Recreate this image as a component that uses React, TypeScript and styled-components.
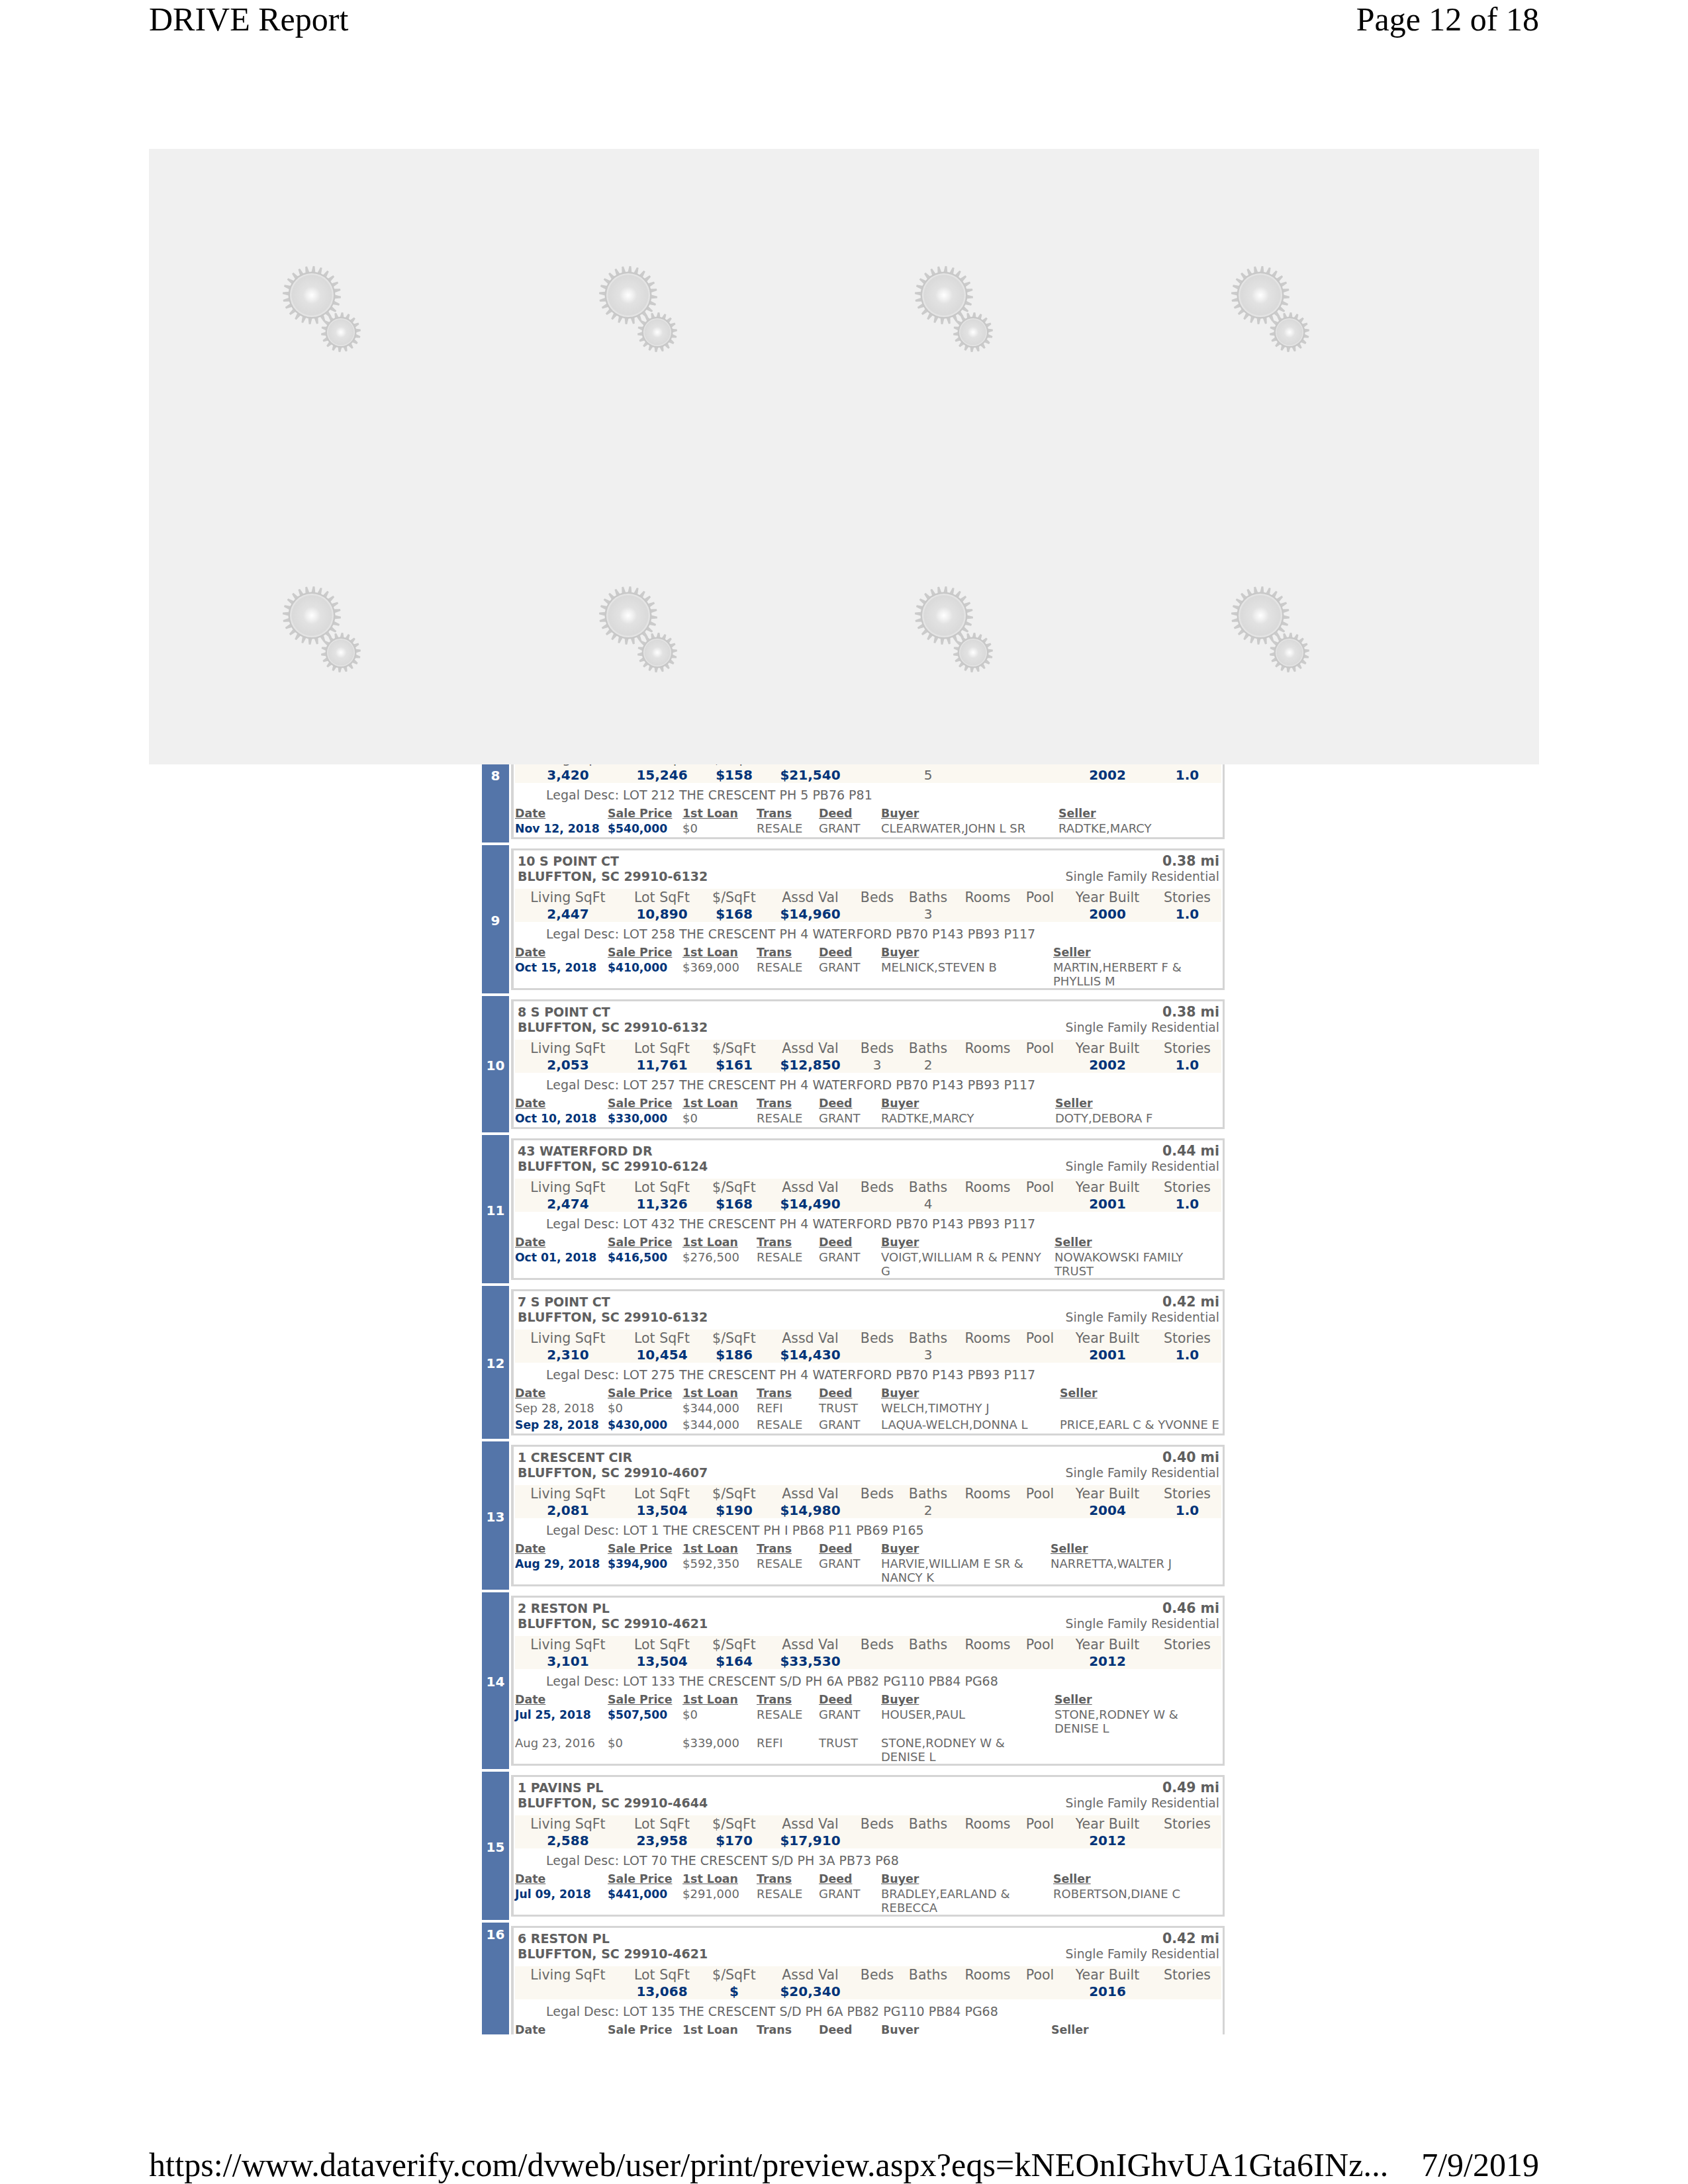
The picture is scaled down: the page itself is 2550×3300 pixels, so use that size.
import React from "react";
import styled, { createGlobalStyle } from "styled-components";

const Global = createGlobalStyle`
  html, body { margin: 0; padding: 0; background: #fff; }
  #root { width: 2550px; height: 3300px; overflow: hidden; }
`;

const Page = styled.div`
  width: 2550px;
  height: 3300px;
  box-sizing: border-box;
  padding: 0 225px;
  display: flex;
  flex-direction: column;
  background: #fff;
`;
const PrintLine = styled.div`
  display: flex;
  justify-content: space-between;
  font-family: "Liberation Serif", "Times New Roman", serif;
  font-size: 50px;
  line-height: 56px;
  color: #000;
  white-space: nowrap;
`;
const Header = styled(PrintLine)`
  height: 225px;
  padding-top: 1px;
  box-sizing: border-box;
`;
const Footer = styled(PrintLine)`
  margin-top: 169px;
`;
const FooterUrl = styled.span`
  letter-spacing: 0.12px;
`;
const MapPanel = styled.div`
  height: 930px;
  flex: none;
  box-sizing: border-box;
  background: #f0f0f0;
  padding: 145px 0 0 175px;
  display: grid;
  grid-template-columns: repeat(4, 477.5px);
  grid-auto-rows: 484px;
`;
const GearSvg = styled.svg`
  display: block;
  width: 170px;
  height: 190px;
`;
const ListClip = styled.div`
  margin-left: 503px;
  width: 1122px;
  height: 1919px;
  flex: none;
  overflow: hidden;
`;
const List = styled.div`
  margin-top: -88px;
  display: flex;
  flex-direction: column;
  gap: 4px;
  font-family: "DejaVu Sans", Verdana, sans-serif;
  color: #666;
`;
const Row = styled.div`
  display: flex;
  gap: 3px;
`;
const NumberCell = styled.div<{ $top?: boolean }>`
  width: 41px;
  flex: none;
  background: #5475a9;
  color: #fff;
  font-weight: 700;
  font-size: 20px;
  line-height: 24px;
  text-align: center;
  display: flex;
  justify-content: center;
  align-items: ${(p) => (p.$top ? "flex-start" : "center")};
  padding-top: ${(p) => (p.$top ? "6px" : "3px")};
  box-sizing: border-box;
`;
const Card = styled.div`
  flex: 1;
  min-width: 0;
  margin: 5px 0;
  border: 3px solid #d5d5d5;
  border-left-width: 4px;
  background: #fff;
  padding-top: 5px;
`;
const TitleBlock = styled.div`
  display: flex;
  justify-content: space-between;
  padding: 0 5px 0 6px;
  height: 46px;
  line-height: 23px;
  white-space: nowrap;
`;
const Address = styled.div`
  font-weight: 700;
  font-size: 19px;
  color: #5f5f5f;
`;
const Meta = styled.div`
  text-align: right;
  font-size: 18.7px;
  color: #6a6a6a;
`;
const Distance = styled.div`
  font-weight: 700;
  font-size: 20.5px;
  color: #5f5f5f;
`;
const Band = styled.div`
  margin: 7px 2px 0;
  height: 50px;
  background: #fbf8f1;
  display: grid;
  grid-template-columns: 160px 124px 94px 136px 66px 88px 92px 66px 138px 103px;
  grid-template-rows: 26px 24px;
  text-align: center;
  white-space: nowrap;
`;
const StatLabel = styled.div`
  font-size: 20.5px;
  line-height: 26px;
  color: #6a6a6a;
`;
const StatValue = styled.div<{ $plain?: boolean }>`
  font-size: 20px;
  line-height: 24px;
  font-weight: ${(p) => (p.$plain ? 400 : 700)};
  color: ${(p) => (p.$plain ? "#666" : "#003378")};
`;
const Legal = styled.div`
  margin-top: 6px;
  padding-left: 49px;
  font-size: 19px;
  line-height: 24px;
  white-space: nowrap;
  color: #666;
`;
const SalesGrid = styled.div<{ $buyerWidth: number }>`
  margin-top: 6px;
  padding-left: 2px;
  display: grid;
  grid-template-columns: 140px 113px 112px 94px 94px ${(p) => p.$buyerWidth}px 1fr;
  row-gap: 2px;
  white-space: pre;
`;
const SalesHead = styled.span`
  font-size: 17.4px;
  font-weight: 700;
  line-height: 21px;
  text-decoration: underline;
  color: #5f5f5f;
`;
const SalesCell = styled.div<{ $strong?: boolean }>`
  font-size: ${(p) => (p.$strong ? "17.2px" : "18px")};
  line-height: 20.5px;
  min-height: 23px;
  font-weight: ${(p) => (p.$strong ? 700 : 400)};
  color: ${(p) => (p.$strong ? "#003378" : "#6a6a6a")};
`;

const Gear = ({ cx, cy, r, disc, teeth, id }: { cx: number; cy: number; r: number; disc: number; teeth: number; id: string }) => (
  <g>
    {Array.from({ length: teeth }, (_, i) => (
      <polygon
        key={i}
        points={`${cx - 3.2},${cy - disc} ${cx - 1.4},${cy - r} ${cx + 1.4},${cy - r} ${cx + 3.2},${cy - disc}`}
        fill="#cbcbcb"
        transform={`rotate(${(360 / teeth) * i + 4} ${cx} ${cy})`}
      />
    ))}
    <circle cx={cx} cy={cy} r={disc + 2.5} fill="#c8c8c8" />
    <circle cx={cx} cy={cy} r={disc} fill={`url(#${id})`} />
  </g>
);

const GearPair = ({ n }: { n: number }) => (
  <GearSvg viewBox="0 0 170 190">
    <defs>
      <radialGradient id={`g${n}`}>
        <stop offset="0" stopColor="#ffffff" />
        <stop offset="0.22" stopColor="#f0f0f0" />
        <stop offset="0.4" stopColor="#e2e2e2" />
        <stop offset="0.9" stopColor="#dadada" />
        <stop offset="0.97" stopColor="#e6e6e6" />
        <stop offset="1" stopColor="#e6e6e6" />
      </radialGradient>
      <filter id={`b${n}`}>
        <feGaussianBlur stdDeviation="0.6" />
      </filter>
    </defs>
    <g filter={`url(#b${n})`}>
      <Gear cx={71} cy={76} r={44} disc={33} teeth={24} id={`g${n}`} />
      <Gear cx={115} cy={132} r={30} disc={21} teeth={18} id={`g${n}`} />
    </g>
  </GearSvg>
);

type Sale = { date: string; price: string; loan: string; trans: string; deed: string; buyer: string; seller: string; strong?: boolean };
type Comp = {
  n: number;
  addr: string;
  zip: string;
  mi: string;
  stats: string[];
  legal: string;
  sellerAt: number;
  sales: Sale[];
  top?: boolean;
};

const labels = ["Living SqFt", "Lot SqFt", "$/SqFt", "Assd Val", "Beds", "Baths", "Rooms", "Pool", "Year Built", "Stories"];
const heads = ["Date", "Sale Price", "1st Loan", "Trans", "Deed", "Buyer", "Seller"];
const WF = "THE CRESCENT PH 4 WATERFORD PB70 P143 PB93 P117";

const comps: Comp[] = [
  {
    n: 8, addr: "\u00a0", zip: "\u00a0", mi: "\u00a0",
    stats: ["3,420", "15,246", "$158", "$21,540", "", "5", "", "", "2002", "1.0"],
    legal: "LOT 212 THE CRESCENT PH 5 PB76 P81", sellerAt: 1599,
    sales: [{ date: "Nov 12, 2018", price: "$540,000", loan: "$0", trans: "RESALE", deed: "GRANT", buyer: "CLEARWATER,JOHN L SR", seller: "RADTKE,MARCY", strong: true }],
  },
  {
    n: 9, addr: "10 S POINT CT", zip: "29910-6132", mi: "0.38",
    stats: ["2,447", "10,890", "$168", "$14,960", "", "3", "", "", "2000", "1.0"],
    legal: `LOT 258 ${WF}`, sellerAt: 1591,
    sales: [{ date: "Oct 15, 2018", price: "$410,000", loan: "$369,000", trans: "RESALE", deed: "GRANT", buyer: "MELNICK,STEVEN B", seller: "MARTIN,HERBERT F &\nPHYLLIS M", strong: true }],
  },
  {
    n: 10, addr: "8 S POINT CT", zip: "29910-6132", mi: "0.38",
    stats: ["2,053", "11,761", "$161", "$12,850", "3", "2", "", "", "2002", "1.0"],
    legal: `LOT 257 ${WF}`, sellerAt: 1594,
    sales: [{ date: "Oct 10, 2018", price: "$330,000", loan: "$0", trans: "RESALE", deed: "GRANT", buyer: "RADTKE,MARCY", seller: "DOTY,DEBORA F", strong: true }],
  },
  {
    n: 11, addr: "43 WATERFORD DR", zip: "29910-6124", mi: "0.44",
    stats: ["2,474", "11,326", "$168", "$14,490", "", "4", "", "", "2001", "1.0"],
    legal: `LOT 432 ${WF}`, sellerAt: 1593,
    sales: [{ date: "Oct 01, 2018", price: "$416,500", loan: "$276,500", trans: "RESALE", deed: "GRANT", buyer: "VOIGT,WILLIAM R & PENNY\nG", seller: "NOWAKOWSKI FAMILY\nTRUST", strong: true }],
  },
  {
    n: 12, addr: "7 S POINT CT", zip: "29910-6132", mi: "0.42",
    stats: ["2,310", "10,454", "$186", "$14,430", "", "3", "", "", "2001", "1.0"],
    legal: `LOT 275 ${WF}`, sellerAt: 1601,
    sales: [
      { date: "Sep 28, 2018", price: "$0", loan: "$344,000", trans: "REFI", deed: "TRUST", buyer: "WELCH,TIMOTHY J", seller: "" },
      { date: "Sep 28, 2018", price: "$430,000", loan: "$344,000", trans: "RESALE", deed: "GRANT", buyer: "LAQUA-WELCH,DONNA L", seller: "PRICE,EARL C & YVONNE E", strong: true },
    ],
  },
  {
    n: 13, addr: "1 CRESCENT CIR", zip: "29910-4607", mi: "0.40",
    stats: ["2,081", "13,504", "$190", "$14,980", "", "2", "", "", "2004", "1.0"],
    legal: "LOT 1 THE CRESCENT PH I PB68 P11 PB69 P165", sellerAt: 1587,
    sales: [{ date: "Aug 29, 2018", price: "$394,900", loan: "$592,350", trans: "RESALE", deed: "GRANT", buyer: "HARVIE,WILLIAM E SR &\nNANCY K", seller: "NARRETTA,WALTER J", strong: true }],
  },
  {
    n: 14, addr: "2 RESTON PL", zip: "29910-4621", mi: "0.46",
    stats: ["3,101", "13,504", "$164", "$33,530", "", "", "", "", "2012", ""],
    legal: "LOT 133 THE CRESCENT S/D PH 6A PB82 PG110 PB84 PG68", sellerAt: 1593,
    sales: [
      { date: "Jul 25, 2018", price: "$507,500", loan: "$0", trans: "RESALE", deed: "GRANT", buyer: "HOUSER,PAUL", seller: "STONE,RODNEY W &\nDENISE L", strong: true },
      { date: "Aug 23, 2016", price: "$0", loan: "$339,000", trans: "REFI", deed: "TRUST", buyer: "STONE,RODNEY W &\nDENISE L", seller: "" },
    ],
  },
  {
    n: 15, addr: "1 PAVINS PL", zip: "29910-4644", mi: "0.49",
    stats: ["2,588", "23,958", "$170", "$17,910", "", "", "", "", "2012", ""],
    legal: "LOT 70 THE CRESCENT S/D PH 3A PB73 P68", sellerAt: 1591,
    sales: [{ date: "Jul 09, 2018", price: "$441,000", loan: "$291,000", trans: "RESALE", deed: "GRANT", buyer: "BRADLEY,EARLAND &\nREBECCA", seller: "ROBERTSON,DIANE C", strong: true }],
  },
  {
    n: 16, addr: "6 RESTON PL", zip: "29910-4621", mi: "0.42",
    stats: ["", "13,068", "$", "$20,340", "", "", "", "", "2016", ""],
    legal: "LOT 135 THE CRESCENT S/D PH 6A PB82 PG110 PB84 PG68", sellerAt: 1588, top: true,
    sales: [],
  },
];

const plainStat = new Set([4, 5, 6, 7]);

const CompRow = ({ c }: { c: Comp }) => (
  <Row>
    <NumberCell $top={c.top}>{c.n}</NumberCell>
    <Card>
      <TitleBlock>
        <Address>
          <div>{c.addr}</div>
          <div>{c.n === 8 ? "\u00a0" : `BLUFFTON, SC ${c.zip}`}</div>
        </Address>
        <Meta>
          <Distance>{c.n === 8 ? "\u00a0" : `${c.mi} mi`}</Distance>
          <div>{c.n === 8 ? "\u00a0" : "Single Family Residential"}</div>
        </Meta>
      </TitleBlock>
      <Band>
        {labels.map((l) => (
          <StatLabel key={l}>{l}</StatLabel>
        ))}
        {c.stats.map((s, i) => (
          <StatValue key={i} $plain={plainStat.has(i)}>
            {s}
          </StatValue>
        ))}
      </Band>
      <Legal>Legal Desc: {c.legal}</Legal>
      <SalesGrid $buyerWidth={c.sellerAt - 1331}>
        {heads.map((h) => (
          <div key={h}>
            <SalesHead>{h}</SalesHead>
          </div>
        ))}
        {c.sales.map((s, i) => (
          <React.Fragment key={i}>
            <SalesCell $strong={s.strong}>{s.date}</SalesCell>
            <SalesCell $strong={s.strong}>{s.price}</SalesCell>
            <SalesCell>{s.loan}</SalesCell>
            <SalesCell>{s.trans}</SalesCell>
            <SalesCell>{s.deed}</SalesCell>
            <SalesCell>{s.buyer}</SalesCell>
            <SalesCell>{s.seller}</SalesCell>
          </React.Fragment>
        ))}
      </SalesGrid>
    </Card>
  </Row>
);

export default function App() {
  return (
    <Page>
      <Global />
      <Header>
        <span>DRIVE Report</span>
        <span>Page 12 of 18</span>
      </Header>
      <MapPanel>
        {Array.from({ length: 8 }, (_, i) => (
          <GearPair key={i} n={i} />
        ))}
      </MapPanel>
      <ListClip>
        <List>
          {comps.map((c) => (
            <CompRow key={c.n} c={c} />
          ))}
        </List>
      </ListClip>
      <Footer>
        <FooterUrl>https://www.dataverify.com/dvweb/user/print/preview.aspx?eqs=kNEOnIGhvUA1Gta6INz...</FooterUrl>
        <span>7/9/2019</span>
      </Footer>
    </Page>
  );
}
